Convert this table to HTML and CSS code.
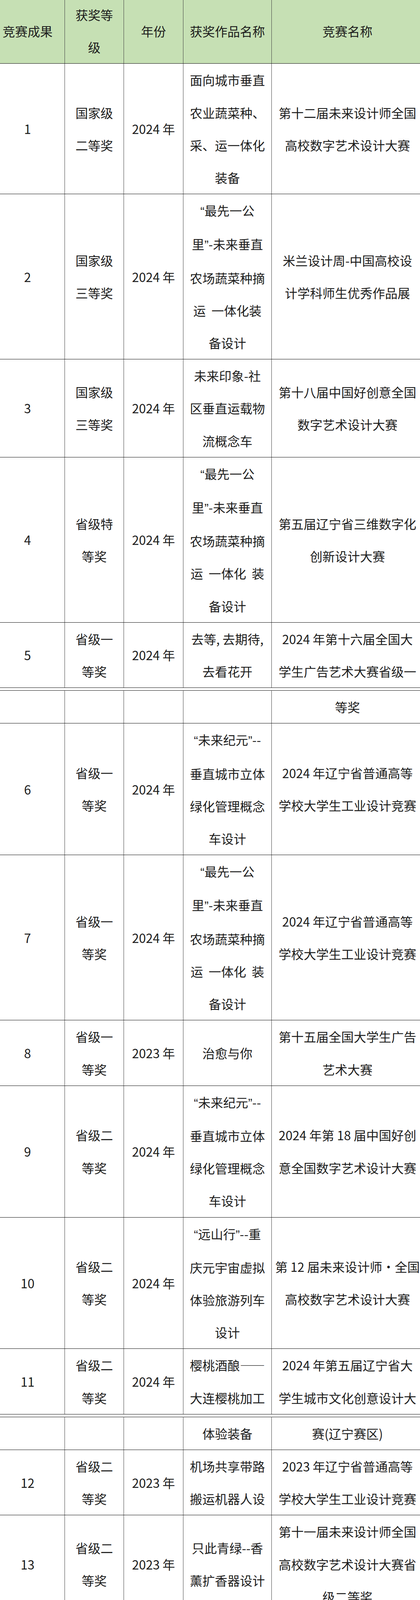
FILE: index.html
```html
<!DOCTYPE html>
<html lang="zh-CN">
<head>
<meta charset="utf-8">
<title>竞赛成果</title>
<link rel="stylesheet" href="styles.css">
</head>
<body>
<div class="sheet">
  <div class="stack">

    <table class="tbl">
      <colgroup><col class="c1"><col class="c2"><col class="c3"><col class="c4"><col class="c5"></colgroup>
      <tr class="hd-green"><td>竞赛成果</td><td>获奖等<br>级</td><td>年份</td><td>获奖作品名称</td><td>竞赛名称</td></tr>
      <tr><td>1</td><td>国家级<br>二等奖</td><td>2024 年</td><td>面向城市垂直<br>农业蔬菜种、<br>采、运一体化<br>装备</td><td>第十二届未来设计师全国<br>高校数字艺术设计大赛</td></tr>
      <tr><td>2</td><td>国家级<br>三等奖</td><td>2024 年</td><td><span class="q">“</span>最先一公<br>里<span class="q">”</span>-未来垂直<br>农场蔬菜种摘<br>运&nbsp;&nbsp;一体化装<br>备设计</td><td>米兰设计周-中国高校设<br>计学科师生优秀作品展</td></tr>
      <tr><td>3</td><td>国家级<br>三等奖</td><td>2024 年</td><td>未来印象-社<br>区垂直运载物<br>流概念车</td><td>第十八届中国好创意全国<br>数字艺术设计大赛</td></tr>
      <tr><td>4</td><td>省级特<br>等奖</td><td>2024 年</td><td><span class="q">“</span>最先一公<br>里<span class="q">”</span>-未来垂直<br>农场蔬菜种摘<br>运&nbsp;&nbsp;一体化&nbsp;&nbsp;装<br>备设计</td><td>第五届辽宁省三维数字化<br>创新设计大赛</td></tr>
      <tr><td>5</td><td>省级一<br>等奖</td><td>2024 年</td><td>去等, 去期待,<br>去看花开</td><td>2024 年第十六届全国大<br>学生广告艺术大赛省级一</td></tr>
    </table>

    <table class="tbl">
      <colgroup><col class="c1"><col class="c2"><col class="c3"><col class="c4"><col class="c5"></colgroup>
      <tr><td></td><td></td><td></td><td></td><td>等奖</td></tr>
      <tr><td>6</td><td>省级一<br>等奖</td><td>2024 年</td><td><span class="q">“</span>未来纪元<span class="q">”</span>--<br>垂直城市立体<br>绿化管理概念<br>车设计</td><td>2024 年辽宁省普通高等<br>学校大学生工业设计竞赛</td></tr>
      <tr><td>7</td><td>省级一<br>等奖</td><td>2024 年</td><td><span class="q">“</span>最先一公<br>里<span class="q">”</span>-未来垂直<br>农场蔬菜种摘<br>运&nbsp;&nbsp;一体化&nbsp;&nbsp;装<br>备设计</td><td>2024 年辽宁省普通高等<br>学校大学生工业设计竞赛</td></tr>
      <tr><td>8</td><td>省级一<br>等奖</td><td>2023 年</td><td>治愈与你</td><td>第十五届全国大学生广告<br>艺术大赛</td></tr>
      <tr><td>9</td><td>省级二<br>等奖</td><td>2024 年</td><td><span class="q">“</span>未来纪元<span class="q">”</span>--<br>垂直城市立体<br>绿化管理概念<br>车设计</td><td>2024 年第 18 届中国好创<br>意全国数字艺术设计大赛</td></tr>
      <tr><td>10</td><td>省级二<br>等奖</td><td>2024 年</td><td><span class="q">“</span>远山行<span class="q">”</span>--重<br>庆元宇宙虚拟<br>体验旅游列车<br>设计</td><td>第 12 届未来设计师·全国<br>高校数字艺术设计大赛</td></tr>
      <tr><td>11</td><td>省级二<br>等奖</td><td>2024 年</td><td>樱桃酒酿——<br>大连樱桃加工</td><td>2024 年第五届辽宁省大<br>学生城市文化创意设计大</td></tr>
    </table>

    <table class="tbl">
      <colgroup><col class="c1"><col class="c2"><col class="c3"><col class="c4"><col class="c5"></colgroup>
      <tr><td></td><td></td><td></td><td>体验装备</td><td>赛(辽宁赛区)</td></tr>
      <tr><td>12</td><td>省级二<br>等奖</td><td>2023 年</td><td>机场共享带路<br>搬运机器人设</td><td>2023 年辽宁省普通高等<br>学校大学生工业设计竞赛</td></tr>
      <tr><td>13</td><td>省级二<br>等奖</td><td>2023 年</td><td>只此青绿--香<br>薰扩香器设计</td><td>第十一届未来设计师全国<br>高校数字艺术设计大赛省<br>级二等奖</td></tr>
      <tr><td>14</td><td>省级二<br>等奖</td><td>2023 年</td><td>智能香薰夜灯</td><td>第十一届未来设计师全国<br>高校数字艺术设计大赛省<br>级二等奖</td></tr>
      <tr><td>15</td><td>省级三<br>等奖</td><td>2024 年</td><td>景区共享露营<br>一体化户外餐<br>吧概念设计</td><td>2024 年辽宁省普通高等<br>学校大学生工业设计竞赛</td></tr>
      <tr><td>16</td><td>省级三<br>等奖</td><td>2024 年</td><td>厨房多功能模<br>块化厨师机</td><td>2024 年辽宁省普通高等<br>学校大学生工业设计竞赛</td></tr>
      <tr><td>17</td><td>省级三<br>等奖</td><td>2023 年</td><td><span class="q">“</span>核<span class="q">”</span>以为家</td><td>2023 年第二届<span class="q">“</span>星海奖<span class="q">”</span>大<br>学生海洋文化创意设计大<br>赛</td></tr>
      <tr><td>18</td><td>省级优<br>秀奖</td><td>2024 年</td><td><span class="q">“</span>最先一公<br>里<span class="q">”</span>-未来垂直<br>农场蔬菜种摘<br>运&nbsp;&nbsp;一体化&nbsp;&nbsp;装<br>备设计</td><td><span class="q">“</span>好设计<span class="q">”</span>装备中国 2024</td></tr>
    </table>

    <table class="tbl">
      <colgroup><col class="c1"><col class="c2"><col class="c3"><col class="c4"><col class="c5"></colgroup>
      <tr><td>19</td><td>省级优<br>秀奖</td><td>2024 年</td><td>一路<span class="q">“</span>代步<span class="q">”</span> --<br>无人驾驶旅游<br>观光车</td><td>2024 年第五届辽宁省大<br>学生城市文化创意设计大<br>赛(辽宁赛区)</td></tr>
      <tr class="hd-blue"><td>大创项目</td><td>项目级<br>别</td><td>年份</td><td>项目名称</td><td>项目类型</td></tr>
      <tr><td>20</td><td>省级</td><td>2024 年</td><td>面向城市垂直<br>农业的蔬菜自<br>动<span class="q">“</span>种、采、运<span class="q">”</span><br>一体化智能装<br>备设计</td><td>大学生创新创业训练项目</td></tr>
      <tr><td>21</td><td>校级</td><td>2023 年</td><td>恰<span class="q">“</span>稻<span class="q">”</span>好处－<br>－互联网＋艺<br>术赋能乡村振<br>兴的创新实践</td><td>大学生创新创业训练项目</td></tr>
      <tr class="hd-yellow"><td>论文</td><td>论文级<br>别</td><td>年份</td><td>论文名称</td><td>发表期刊名称</td></tr>
      <tr><td>22</td><td>知网</td><td>2024 年</td><td>乡村振兴视阈<br>下艺术设计创<br>新创业路径研<br>究-以沈阳市<br><span class="q">“</span>稻梦空间<span class="q">”</span>为<br>例</td><td>美与时代</td></tr>
    </table>

  </div>
</div>
</body>
</html>
```

FILE: styles.css
```css
html, body {
  margin: 0;
  padding: 0;
  background: #ffffff;
}

.sheet {
  width: 1074px;
  height: 7291px;
  overflow: hidden;
}

.stack {
  display: flex;
  flex-direction: column;
  gap: 6px;
  margin-top: -5px;
  margin-left: -25px;
  width: 1107px;
}

.tbl {
  width: 1107px;
  table-layout: fixed;
  border-collapse: collapse;
  font-family: "Noto Sans CJK SC", "Noto Sans", sans-serif;
  font-size: 32px;
  line-height: 83.2px;
  color: #1c1c1c;
}

.c1 { width: 190px; }
.c2 { width: 151px; }
.c3 { width: 152px; }
.c4 { width: 226px; }
.c5 { width: 388px; }

.tbl td {
  padding: 0 6px;
  text-align: center;
  vertical-align: middle;
  white-space: nowrap;
  line-height: 83.2px;
  border-top: 1px solid #111;
  border-bottom: 1px solid #111;
  border-left: 1px solid #444;
  border-right: 1px solid #444;
}

.q {
  font-family: "Liberation Sans", sans-serif;
}

.hd-green td { background: #c6e0b4; }
.hd-blue td { background: #b4c7e7; }
.hd-yellow td { background: #fee69c; }
```
